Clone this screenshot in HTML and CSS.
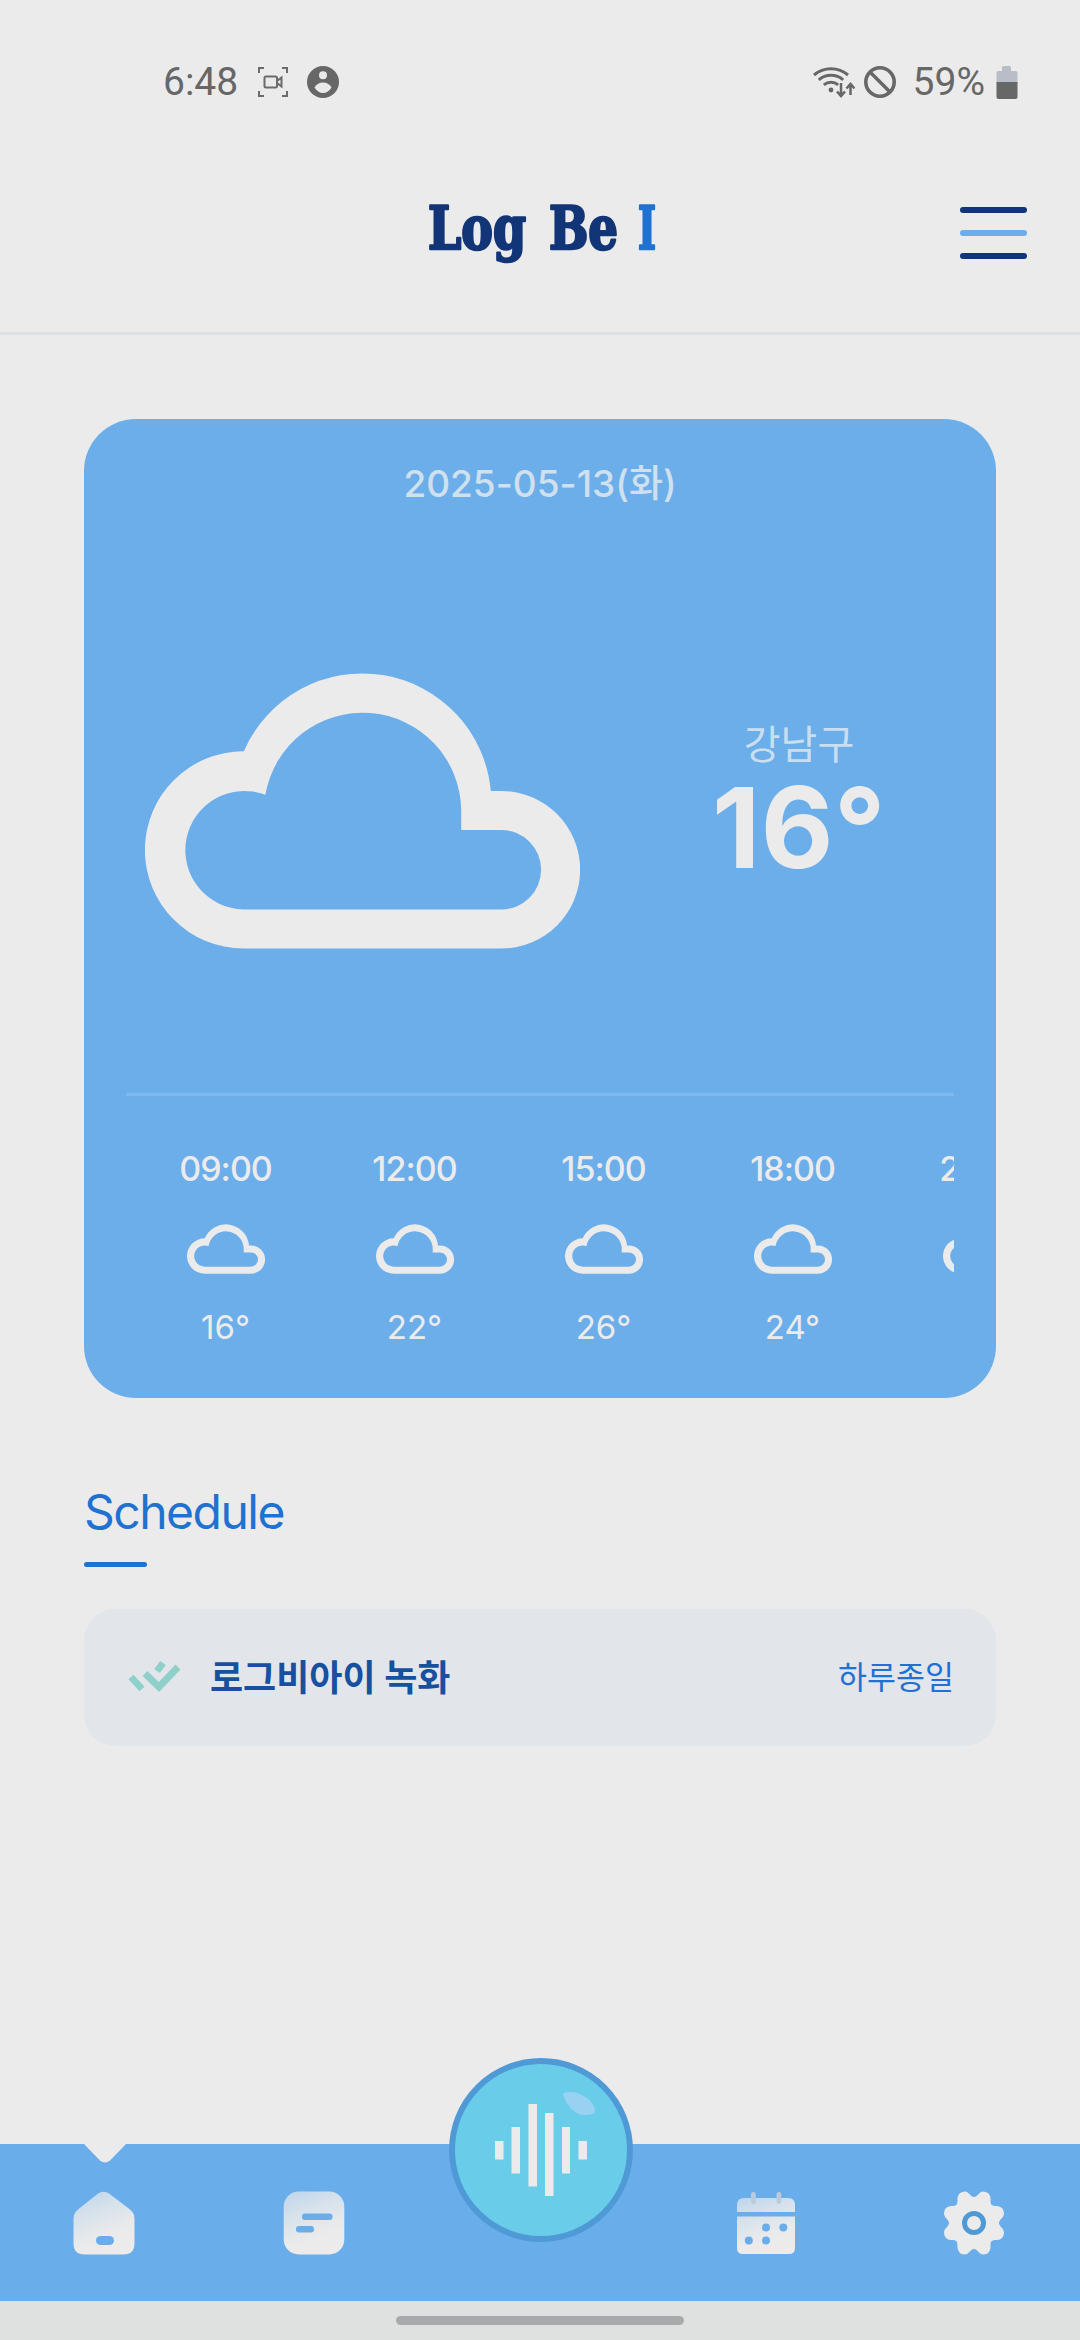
FILE: index.html
```html
<!DOCTYPE html>
<html lang="ko">
<head>
<meta charset="utf-8">
<title>Log Be I</title>
<link rel="stylesheet" href="styles.css">
</head>
<body>
<svg class="defs" width="0" height="0" aria-hidden="true">
  <symbol id="cloud" viewBox="145 673 435 276">
    <path fill="currentColor" fill-rule="evenodd" d="M244 751A129 129 0 0 1 490.800 791H501.400A78.700 78.700 0 0 1 501.400 948.500H243.500A98.600 98.600 0 0 1 243.500 751.300ZM265.400 794.800A59.200 59.200 0 1 0 243.500 909.400H501.400A39.700 39.700 0 0 0 501.400 830H461.200V810A98.600 98.600 0 0 0 265.400 794.800Z"/>
  </symbol>
</svg>

<div class="status">
  <div class="status-left">
    <span>6:48</span>
    <svg class="rec" viewBox="0 0 30 30" width="30" height="30" fill="none" stroke="#696b6c" stroke-width="2">
      <path d="M1 6V1H6M24 1H29V6M29 24V29H24M6 29H1V24"/>
      <rect x="6.500" y="9.500" width="12.500" height="11" rx="1.500"/>
      <path d="M19 14l4.500-3.500v9L19 16"/>
    </svg>
    <svg class="user" viewBox="0 0 32 32" width="32" height="32">
      <circle cx="16" cy="16" r="16" fill="#666766"/>
      <circle cx="16" cy="9.200" r="4" fill="#eaeaea"/>
      <path d="M7.500 21.500C9.500 18 12.500 16.500 16 16.500S22.500 18 24.500 21.500C22.500 25 19.500 27 16 27S9.500 25 7.500 21.500Z" fill="#eaeaea"/>
    </svg>
  </div>
  <div class="status-right">
    <svg class="wifi" viewBox="0 0 42 34" width="42" height="34" fill="none" stroke="#666766" stroke-width="3">
      <path d="M1 10A26 26 0 0 1 35 10M5.800 14.800A18.500 18.500 0 0 1 30.200 14.800M10.800 19.800A11.500 11.500 0 0 1 25.200 19.800"/>
      <circle cx="18" cy="25" r="2.400" fill="#666766" stroke="none"/>
      <path d="M28 18V30M24 26.500L28 31L32 26.500M37.500 30V20M33.500 23.500L37.500 19L41.500 23.500" stroke-width="2.500"/>
    </svg>
    <svg class="block" viewBox="0 0 32 32" width="32" height="32" fill="none" stroke="#666766" stroke-width="3.600">
      <circle cx="16" cy="16" r="14.200"/><path d="M6 6L26 26"/>
    </svg>
    <span>59%</span>
    <svg class="battery" viewBox="0 0 22 33" width="22" height="33">
      <path fill="#b9bdc8" d="M7.500 0H13.500Q15 0 15 2V5H19.500Q21.500 5 21.500 7V18H.500V7Q.500 5 2.500 5H6V2Q6 0 7.500 0Z"/>
      <path fill="#666766" d="M.500 16H21.500V31Q21.500 33 19.500 33H2.500Q.500 33 .500 31Z"/>
    </svg>
  </div>
</div>

<header class="header">
  <svg class="logo" viewBox="0 0 232 70" width="232" height="70">
    <text x="2" y="49" textLength="98" lengthAdjust="spacingAndGlyphs" fill="#123577" stroke="#123577">Log</text>
    <text x="123" y="49" textLength="69" lengthAdjust="spacingAndGlyphs" fill="#123577" stroke="#123577">Be</text>
    <text x="212" y="49" textLength="18" lengthAdjust="spacingAndGlyphs" fill="#1f71d2" stroke="#1f71d2">I</text>
  </svg>
  <div class="menu"><i></i><i></i><i></i></div>
</header>

<main class="main">
  <section class="weather">
    <div class="date">2025-05-13(화)</div>
    <div class="now">
      <svg class="cloud-big"><use href="#cloud"/></svg>
      <div class="place">
        <div class="district">강남구</div>
        <div class="temp">16°</div>
      </div>
    </div>
    <div class="hours">
      <div class="hour"><span class="time">09:00</span><svg><use href="#cloud"/></svg><span class="deg">16°</span></div>
      <div class="hour"><span class="time">12:00</span><svg><use href="#cloud"/></svg><span class="deg">22°</span></div>
      <div class="hour"><span class="time">15:00</span><svg><use href="#cloud"/></svg><span class="deg">26°</span></div>
      <div class="hour"><span class="time">18:00</span><svg><use href="#cloud"/></svg><span class="deg">24°</span></div>
      <div class="hour"><span class="time">21:00</span><svg><use href="#cloud"/></svg></div>
    </div>
  </section>

  <h2 class="heading">Schedule</h2>
  <div class="event">
    <svg class="check" viewBox="0 0 52 34" width="52" height="34" fill="none" stroke="#90d0cb" stroke-width="7">
      <path d="M3 17L14 29M17 13.500L31 27L50 7M29 11L35 3"/>
    </svg>
    <span class="event-title">로그비아이 녹화</span>
    <span class="event-time">하루종일</span>
  </div>
</main>

<nav class="nav">
  <svg class="notch" viewBox="0 0 44 20" width="44" height="20"><path fill="#ebebeb" d="M0 0H44L27 17.500Q22 21.500 17 17.500Z"/></svg>
  <svg viewBox="0 0 62 64" width="62" height="64">
    <defs><linearGradient id="sheen" x1=".2" y1="0" x2=".6" y2="1"><stop offset="0" stop-color="#c2d7ec"/><stop offset=".3" stop-color="#d5e1eb"/><stop offset=".65" stop-color="#e8e9eb"/><stop offset=".8" stop-color="#ebebeb"/></linearGradient></defs>
    <path fill="url(#sheen)" d="M25 2.500Q30.500-1 36 2.500L57 18.500Q61.500 22 61.500 28V52.500Q61.500 63.500 50.500 63.500H11.500Q.500 63.500 .500 52.500V28Q.500 22 5 18.500Z"/>
    <rect x="23" y="45" width="18" height="9" rx="4.500" fill="#69aeeb"/>
  </svg>
  <svg viewBox="0 0 62 64" width="62" height="64">
    <rect x=".700" y=".500" width="60.600" height="63" rx="15" fill="url(#sheen)"/>
    <rect x="19" y="22.500" width="30.500" height="6.500" rx="3" fill="#69aeeb"/>
    <rect x="13" y="35" width="18" height="6.500" rx="3" fill="#69aeeb"/>
  </svg>
  <button class="record" aria-label="record">
    <svg viewBox="0 0 172 172" width="172" height="172">
      <path fill="#98d1f1" d="M109 33C106 29 110 28 116 28C128 28 141 40 140 47C139 51 134 51 128 51C119 50 112 41 109 33Z"/>
      <g fill="#ebebeb">
        <rect x="40" y="77" width="8.500" height="18.500"/><rect x="56.500" y="63" width="8.500" height="46.500"/>
        <rect x="73.500" y="40" width="8.500" height="82.500"/><rect x="90" y="49" width="8.500" height="83"/>
        <rect x="107" y="63" width="8" height="46.500"/><rect x="123.500" y="77" width="8.500" height="18.500"/>
      </g>
    </svg>
  </button>
  <svg viewBox="0 0 62 64" width="62" height="64">
    <path fill="url(#sheen)" d="M2 21V14Q2 7 9 7H53Q60 7 60 14V21ZM2 25.500H60V57Q60 63 54 63H8Q2 63 2 57Z"/>
    <g fill="#bccbd9"><rect x="16" y="1" width="4.800" height="12" rx="2.400"/><rect x="41.500" y="1" width="4.800" height="12" rx="2.400"/></g>
    <g fill="#69aeeb"><circle cx="31" cy="36.500" r="4"/><circle cx="48.300" cy="36.500" r="4"/><circle cx="13.800" cy="49.500" r="4"/><circle cx="31" cy="49.500" r="4"/></g>
  </svg>
  <svg viewBox="0 0 62 64" width="62" height="64">
    <path fill="#ebebeb" d="M31 6C34.500 6 36 .500 40.500 .500Q47 1 47.500 7.500C47.500 14 48 15 54 15Q60.500 15.500 61 22C61 27 56 28.500 56 32C56 35.500 61 37 61 42Q60.500 48.500 54 49C48 49 47.500 50 47.500 56.500Q47 63 40.500 63.500C36 63.500 34.500 58 31 58C27.500 58 26 63.500 21.500 63.500Q15 63 14.500 56.500C14.500 50 14 49 8 49Q1.500 48.500 1 42C1 37 6 35.500 6 32C6 28.500 1 27 1 22Q1.500 15.500 8 15C14 15 14.500 14 14.500 7.500Q15 1 21.500 .500C26 .500 27.500 6 31 6Z"/>
    <circle cx="31" cy="32" r="9.500" fill="none" stroke="#4f9ad6" stroke-width="5"/>
  </svg>
</nav>
<footer class="gesture"><i></i></footer>
</body>
</html>
```
FILE: styles.css
```css
* { box-sizing: border-box; }
body {
  margin: 0;
  width: 1080px;
  height: 2340px;
  overflow: hidden;
  display: flex;
  flex-direction: column;
  background: #ebebeb;
  font-family: Inter, "Noto Sans CJK KR", sans-serif;
}
svg { display: block; flex: none; }
.defs { position: absolute; }

.status {
  height: 165px;
  padding: 58px 62px 0 163px;
  display: flex;
  justify-content: space-between;
  align-items: flex-start;
  font: 400 39px/48px Roboto, sans-serif;
  color: #666766;
}
.status-left, .status-right { display: flex; align-items: center; height: 48px; }
.rec { margin-left: 20px; }
.user { margin-left: 19px; }
.block { margin-left: 9px; }
.status-right span { margin-left: 17px; }
.battery { margin-left: 11px; }

.header {
  height: 170px;
  padding: 35px 53px 0 426px;
  display: flex;
  justify-content: space-between;
  align-items: flex-start;
  border-bottom: 3px solid #dde1e4;
}
.logo {
  overflow: visible;
  font-family: "DejaVu Serif Condensed", "DejaVu Serif", serif;
  font-weight: 700;
  font-size: 60px;
  stroke-width: 2.5px;
  stroke-linejoin: round;
}
.menu { display: grid; gap: 17px; padding-top: 7px; }
.menu i { width: 67px; height: 6px; border-radius: 3px; background: #123577; }
.menu i:nth-child(2) { background: #6baeea; }

.main { flex: 1; padding: 84px 84px 0; }
.weather {
  height: 979px;
  padding: 41px 42px 0;
  border-radius: 52px;
  background: #6baeea;
  color: #ebebeb;
}
.date {
  font-size: 37px;
  line-height: 48px;
  font-weight: 500;
  text-align: center;
  color: #cfe0ee;
}
.now { height: 585px; padding: 165px 0 0 19px; display: flex; }
.cloud-big { width: 435px; height: 276px; }
.place { width: 218px; margin-left: 110px; padding-top: 46px; text-align: center; }
.district { font-size: 40px; line-height: 52px; color: #c9dff0; }
.temp { font-size: 112px; line-height: 112px; font-weight: 700; letter-spacing: 0.5px; }
.hours {
  display: flex;
  height: 290px;
  padding: 53px 0 0 5px;
  border-top: 3px solid #82b9ec;
  overflow: hidden;
}
.hour { flex: 0 0 189px; display: flex; flex-direction: column; align-items: center; }
.hour svg { width: 78px; height: 50px; margin: 35px 0 33px; }
.time { font-size: 34px; line-height: 40px; font-weight: 500; letter-spacing: -1px; }
.deg { font-size: 33px; line-height: 40px; }

.heading {
  margin: 84px 0 0;
  font-size: 48px;
  line-height: 60px;
  font-weight: 400;
  letter-spacing: -1.5px;
  color: #1f71d2;
}
.heading::after {
  content: "";
  display: block;
  width: 63px;
  height: 5px;
  margin-top: 20px;
  border-radius: 3px;
  background: #1f71d2;
}
.event {
  height: 137px;
  margin-top: 42px;
  padding: 0 42px 5px 44px;
  display: flex;
  align-items: center;
  border-radius: 31px;
  background: #e2e6eb;
}
.check { margin-top: 3px; }
.event-title { margin-left: 30px; font-size: 36px; font-weight: 700; color: #17509f; }
.event-time { margin-left: auto; font-size: 31.5px; color: #1f71d2; }

.nav {
  position: relative;
  height: 157px;
  display: grid;
  grid-template-columns: 207px 213px 242px 208px 208px;
  justify-items: center;
  align-items: start;
  padding-top: 47px;
  background: #69aeeb;
}
.notch { position: absolute; left: 83px; top: -1px; }
.record {
  width: 184px;
  height: 184px;
  margin: -133px 0 -80px;
  padding: 0;
  border: 6px solid #4f9ad6;
  border-radius: 50%;
  background: #69cdea;
}
.gesture {
  height: 39px;
  display: flex;
  justify-content: center;
  padding-top: 15px;
  background: #dfe1e0;
}
.gesture i { width: 288px; height: 9px; border-radius: 5px; background: #a9aaab; }
```
